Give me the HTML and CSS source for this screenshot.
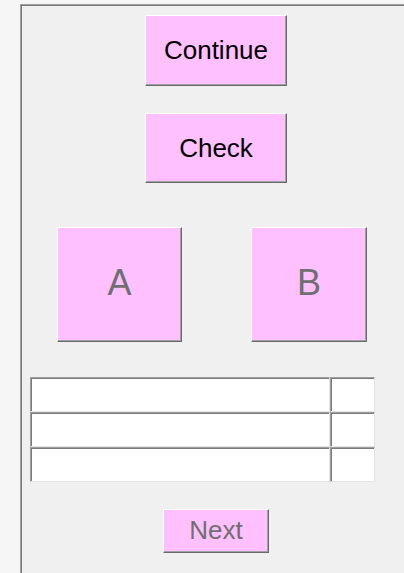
FILE: index.html
```html
<!DOCTYPE html>
<html>
<head>
<meta charset="utf-8">
<link rel="stylesheet" href="styles.css">
</head>
<body>
<div class="panel">
  <button class="btn btn-wide btn-continue">Continue</button>
  <button class="btn btn-wide btn-check">Check</button>
  <div class="choices">
    <button class="btn choice choice-a">A</button>
    <button class="btn choice choice-b">B</button>
  </div>
  <div class="answers">
    <div class="row"><div class="cell cell-main"></div><div class="cell cell-side"></div></div>
    <div class="row"><div class="cell cell-main"></div><div class="cell cell-side"></div></div>
    <div class="row"><div class="cell cell-main"></div><div class="cell cell-side"></div></div>
  </div>
  <button class="btn btn-next">Next</button>
</div>
</body>
</html>
```

FILE: styles.css
```css
* { box-sizing: border-box; }

html, body {
  margin: 0;
  height: 100%;
  overflow: hidden;
}

body {
  background: #f6f6f6;
  font-family: "Liberation Sans", Arial, sans-serif;
  padding: 4px 0 0 20px;
}

.panel {
  width: 100%;
  height: 100%;
  background: #f0f0f0;
  border-top: 1px solid #a0a0a0;
  border-left: 1px solid #a0a0a0;
  box-shadow: inset 1px 1px 0 #7a7a7a;
  padding: 10px 0 0 1px;
  display: flex;
  flex-direction: column;
  align-items: flex-start;
}

/* raised bevel buttons */
.btn {
  font-family: inherit;
  background: #ffc0ff;
  border: 1px solid;
  border-color: #ffffff #6a6a6a #6a6a6a #ffffff;
  box-shadow: inset -1px -1px 0 #a0a0a0;
  padding: 0;
  margin: 0;
  display: flex;
  align-items: center;
  justify-content: center;
  font-size: 26px;
  color: #000;
  flex-shrink: 0;
}

.btn-wide {
  width: 142px;
  margin-left: 123px;
}

.btn-continue { height: 71px; }

.btn-check {
  height: 70px;
  margin-top: 27px;
}

.choices {
  display: flex;
  gap: 69px;
  margin: 44px 0 0 35px;
  flex-shrink: 0;
}

.choice {
  height: 115px;
  font-size: 36px;
  color: #6f6f6f;
  padding-bottom: 3px;
}

.choice-a { width: 125px; }
.choice-b { width: 116px; }

.answers {
  margin: 35px 0 0 8px;
  display: flex;
  flex-direction: column;
  flex-shrink: 0;
}

.row {
  display: flex;
  height: 35px;
}

/* sunken text cells */
.cell {
  background: #ffffff;
  border-top: 1px solid #a0a0a0;
  border-left: 1px solid #a0a0a0;
  border-right: 1px solid #e3e3e3;
  border-bottom: 1px solid #e3e3e3;
  box-shadow: inset 1px 1px 0 #7a7a7a;
}

.cell-main { width: 300px; }
.cell-side { width: 45px; }

.btn-next {
  width: 106px;
  height: 44px;
  margin: 27px 0 0 141px;
  color: #6f6f6f;
  padding-bottom: 2px;
}
```
